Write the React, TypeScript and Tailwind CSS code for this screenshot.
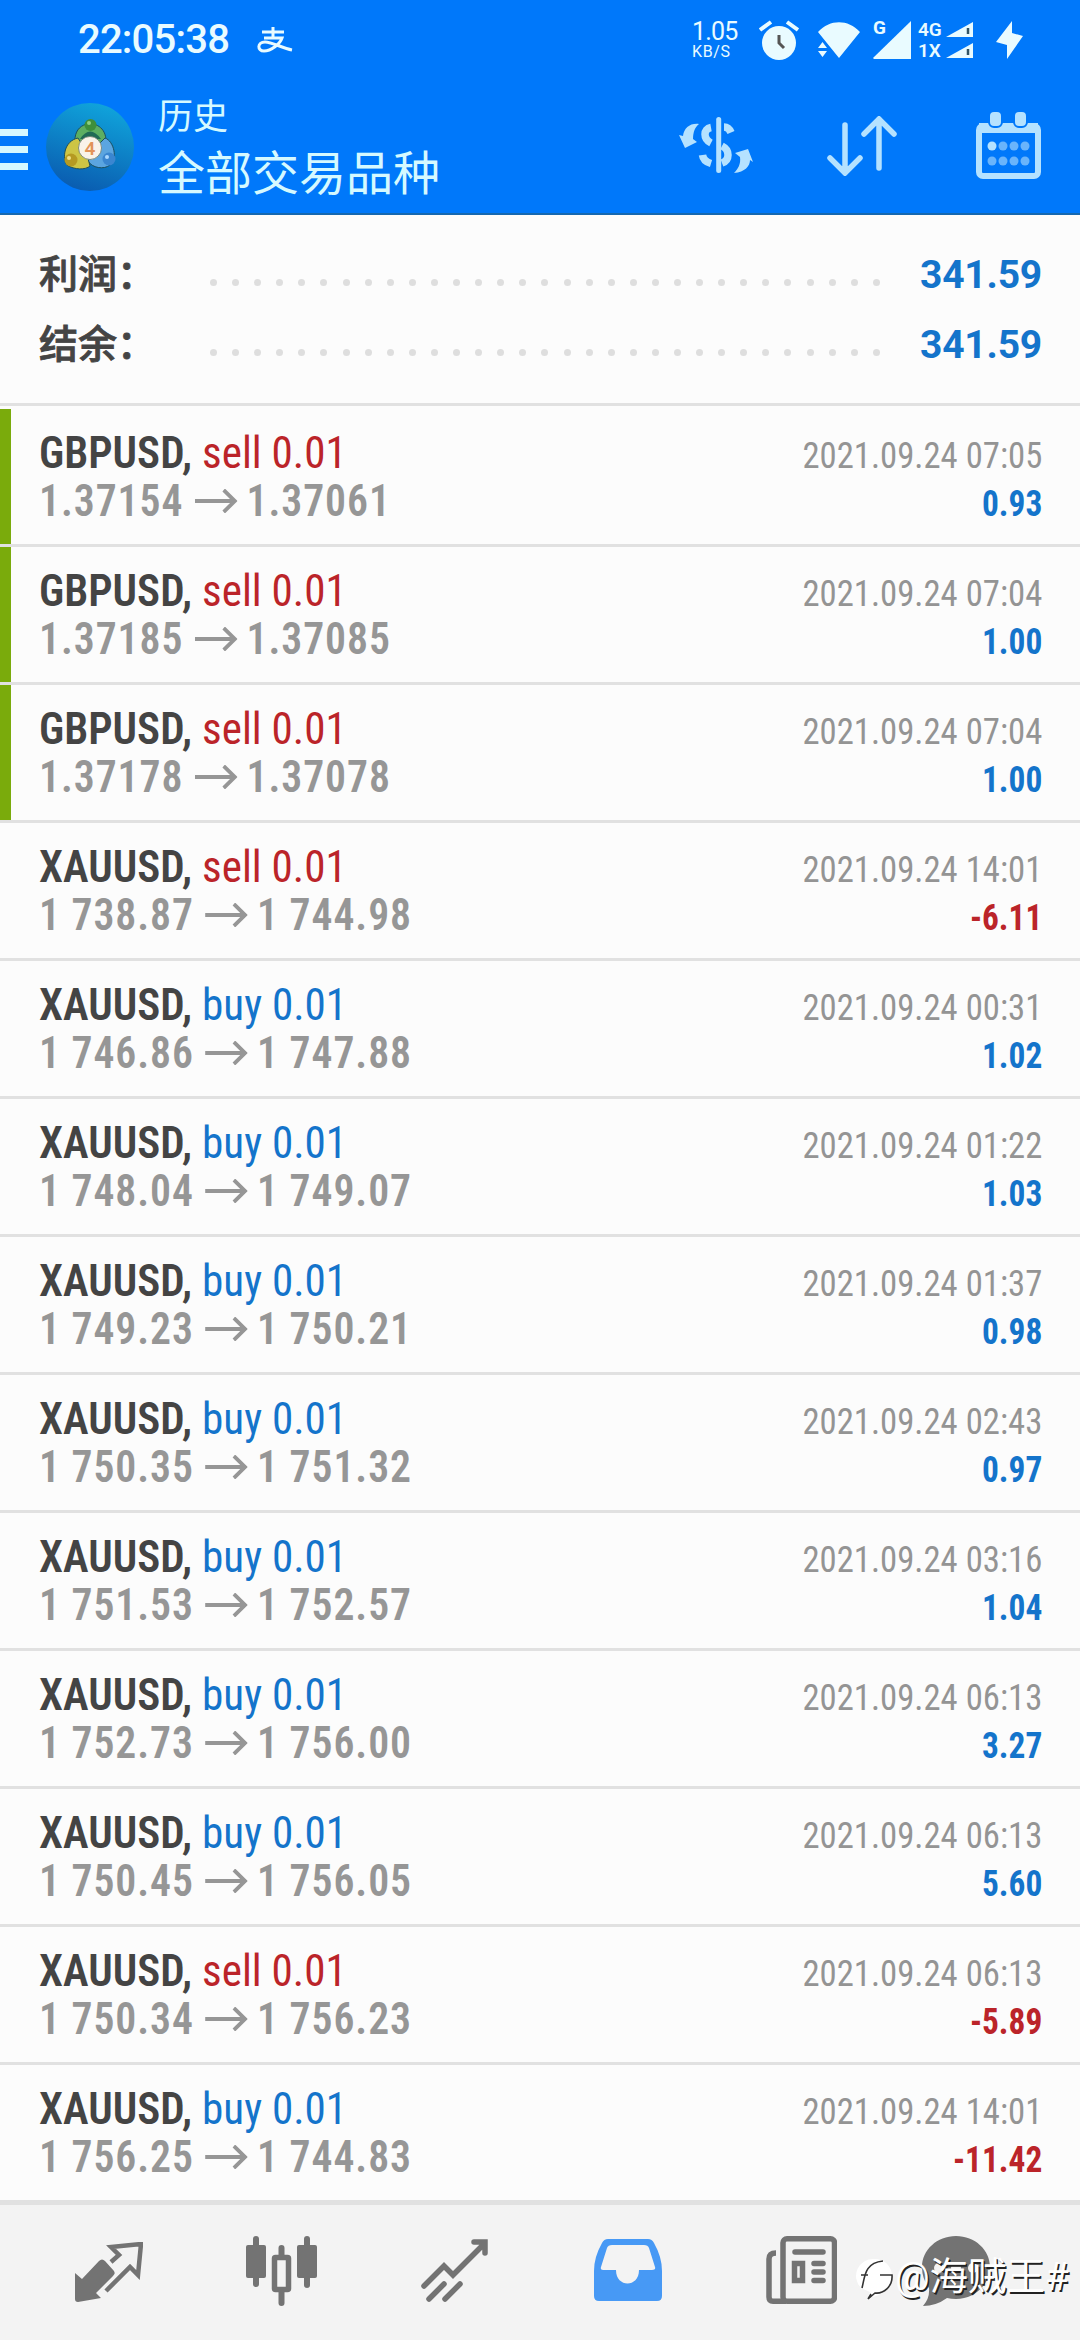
import type { ReactNode } from "react";

interface Deal {
  symbol: string;
  side: "buy" | "sell";
  open: string;
  close: string;
  time: string;
  profit: string;
  marked?: boolean;
}

const deals: Deal[] = [
  { symbol: "GBPUSD", side: "sell", open: "1.37154", close: "1.37061", time: "2021.09.24 07:05", profit: "0.93", marked: true },
  { symbol: "GBPUSD", side: "sell", open: "1.37185", close: "1.37085", time: "2021.09.24 07:04", profit: "1.00", marked: true },
  { symbol: "GBPUSD", side: "sell", open: "1.37178", close: "1.37078", time: "2021.09.24 07:04", profit: "1.00", marked: true },
  { symbol: "XAUUSD", side: "sell", open: "1 738.87", close: "1 744.98", time: "2021.09.24 14:01", profit: "-6.11" },
  { symbol: "XAUUSD", side: "buy", open: "1 746.86", close: "1 747.88", time: "2021.09.24 00:31", profit: "1.02" },
  { symbol: "XAUUSD", side: "buy", open: "1 748.04", close: "1 749.07", time: "2021.09.24 01:22", profit: "1.03" },
  { symbol: "XAUUSD", side: "buy", open: "1 749.23", close: "1 750.21", time: "2021.09.24 01:37", profit: "0.98" },
  { symbol: "XAUUSD", side: "buy", open: "1 750.35", close: "1 751.32", time: "2021.09.24 02:43", profit: "0.97" },
  { symbol: "XAUUSD", side: "buy", open: "1 751.53", close: "1 752.57", time: "2021.09.24 03:16", profit: "1.04" },
  { symbol: "XAUUSD", side: "buy", open: "1 752.73", close: "1 756.00", time: "2021.09.24 06:13", profit: "3.27" },
  { symbol: "XAUUSD", side: "buy", open: "1 750.45", close: "1 756.05", time: "2021.09.24 06:13", profit: "5.60" },
  { symbol: "XAUUSD", side: "sell", open: "1 750.34", close: "1 756.23", time: "2021.09.24 06:13", profit: "-5.89" },
  { symbol: "XAUUSD", side: "buy", open: "1 756.25", close: "1 744.83", time: "2021.09.24 14:01", profit: "-11.42" },
];

function StatusBar() {
  return (
    <div className="flex h-20 items-center pl-[78px] text-[#e9fbff]">
      <span className="w-[151px] text-[40px] leading-[78px] font-medium tracking-[-0.8px] whitespace-nowrap">22:05:38</span>
      <svg className="ml-[28px] h-[27px] w-[36px]" viewBox="0 0 36 27" fill="none" stroke="currentColor" strokeWidth="3">
        <path d="M5 5H27M16 0V11M7 11H25C23 17 14 24 7 24C0 24 0 15 8 15C15 15 25 21 35 23" />
      </svg>
      <div className="ml-[399px] w-[46px]">
        <div className="text-[25px] leading-[24px] tracking-[-0.8px]">1.05</div>
        <div className="text-[16px] leading-[16px] tracking-[0.6px]">KB/S</div>
      </div>
      <svg className="ml-[21px] h-10 w-10" viewBox="0 0 40 40" fill="none">
        <circle cx="20" cy="23" r="17" fill="currentColor" />
        <path d="M1 10L12 2M28 2L39 10" stroke="currentColor" strokeWidth="4" />
        <path d="M20 15V23L25 28" stroke="#555" strokeWidth="3" />
      </svg>
      <svg className="ml-[19px] h-[36px] w-[42px]" viewBox="0 0 42 36" fill="currentColor">
        <path d="M0 10C12 -3 30 -3 42 10L21 36ZM0 26L4.500 20L9 26ZM0 29H9L4.500 35Z" />
      </svg>
      <div className="relative ml-[13px] h-[38px] w-[38px]">
        <svg className="h-[38px] w-[38px]" viewBox="0 0 38 38" fill="currentColor">
          <path d="M0 37L38 0V38H1Z" />
        </svg>
        <span className="absolute -top-[3px] left-0 text-[19px] leading-[20px] font-bold">G</span>
      </div>
      <div className="ml-[7px] flex flex-col text-[19px] leading-[21px] font-semibold">
        <div className="flex items-center gap-[1px]"><span className="w-[27px]">4G</span><SmallSignal /></div>
        <div className="flex items-center gap-[1px]"><span className="w-[27px]">1X</span><SmallSignal /></div>
      </div>
      <svg className="ml-[23px] h-[38px] w-[27px]" viewBox="0 0 27 38" fill="currentColor">
        <path d="M16 0L0 21L11 24V38L27 15L16 12Z" />
      </svg>
    </div>
  );
}

function SmallSignal() {
  return (
    <svg className="h-[15px] w-[27px]" viewBox="0 0 27 15">
      <path d="M0 15L27 0V15Z" fill="currentColor" />
      <path d="M22 6V12" stroke="#356" strokeWidth="2.500" />
    </svg>
  );
}

function Toolbar() {
  return (
    <div className="flex h-[135px] items-start border-b-2 border-[#1668b0] text-[#b5e2ff]">
      <div className="mt-[49px] flex w-[28px] flex-col gap-[10px]">
        <div className="h-[7px] bg-[#d5f8ff]" />
        <div className="h-[7px] bg-[#d5f8ff]" />
        <div className="h-[7px] bg-[#d5f8ff]" />
      </div>
      <Logo />
      <div className="ml-[23px] w-[521px] text-[#d5f9ff]">
        <div className="mt-[16px] text-[35px] leading-[44px]">历史</div>
        <div className="text-[47px] leading-[68px]">全部交易品种</div>
      </div>
      <svg className="mt-[37px] h-[56px] w-[74px]" viewBox="678 117 74 56" fill="none" stroke="currentColor">
        <path d="M717.700 119.500V170.500" strokeWidth="5" strokeLinecap="round" />
        <path d="M710 127.500C702 129 702 139 710 143M701.500 155C702 159 705 162 710 163.500" strokeWidth="7.500" />
        <path d="M723 127C727 127 729 130 730 132.500M721 146C729 150 729 160 721 163" strokeWidth="7.500" />
        <path d="M698 124C689 123 683 128 682 136L678 135L684 148L696 142L692 139C692 132 694 127 698 124ZM733 173C744 172 749 166 749 160L752 162L747 149L734 153L739 157C740 164 737 169 733 173Z" fill="currentColor" stroke="none" />
      </svg>
      <svg className="mt-[36px] ml-[74px] h-[60px] w-[70px]" viewBox="826 116 70 60" fill="none" stroke="currentColor" strokeWidth="5.500" strokeLinecap="round">
        <path d="M844 125V173M829 158L844 173L859 158M878 168V119M863 134L878 119L893 134" />
      </svg>
      <Calendar />
    </div>
  );
}

function Logo() {
  return (
    <svg className="mt-[22px] ml-[17px] h-[90px] w-[90px]" viewBox="45 102 90 90">
      <defs>
        <linearGradient id="disc" x1="0.700" y1="0" x2="0.400" y2="1">
          <stop offset="0" stopColor="#10a5dc" />
          <stop offset="1" stopColor="#0a5cb0" />
        </linearGradient>
      </defs>
      <circle cx="90" cy="147" r="44" fill="url(#disc)" />
      <g stroke="#1d4f5c" strokeWidth="1">
        <path d="M75 141C74 118 106 118 106 141L101 146H80Z" fill="#5cae62" />
        <path d="M92 151L105 138C114 141 118 159 110 165C104 170 92 168 88 161Z" fill="#5ba5e0" />
        <path d="M78 138C64 141 62 158 67 165C74 170 86 170 90 166L86 151Z" fill="#cdc544" />
      </g>
      <path d="M80 139Q90 124 101 139Z" fill="#206a55" />
      <circle cx="90.500" cy="125" r="6" fill="#3f8f3a" />
      <circle cx="71" cy="160" r="6.500" fill="#b59a22" />
      <circle cx="109" cy="159" r="6.500" fill="#3a86d0" />
      <circle cx="89" cy="123" r="2" fill="#8fcf80" />
      <circle cx="69" cy="158" r="2" fill="#efe08a" />
      <circle cx="107" cy="157" r="2" fill="#a9d8ff" />
      <circle cx="90" cy="148" r="11.500" fill="#f9f3ea" stroke="#6a7a6a" strokeWidth="0.800" />
      <text x="90" y="155" textAnchor="middle" fontSize="19" fontWeight="600" fill="#e2935a">4</text>
    </svg>
  );
}

function Calendar() {
  return (
    <svg className="mt-[32px] ml-[79px] h-[68px] w-[65px]" viewBox="975 112 65 68">
      <rect x="978" y="126" width="59" height="50" rx="4" fill="none" stroke="currentColor" strokeWidth="6" />
      <rect x="978" y="123" width="59" height="10" fill="currentColor" />
      <rect x="988" y="111" width="13" height="16" rx="5" fill="currentColor" stroke="#0078fa" strokeWidth="2" />
      <rect x="1013" y="111" width="13" height="16" rx="5" fill="currentColor" stroke="#0078fa" strokeWidth="2" />
      {[991, 1002, 1013, 1024].map((x) => (
        <g key={x} fill="#69b4fb">
          <circle cx={x} cy="146" r="4.500" fill={x === 991 ? "#b5e2ff" : "#69b4fb"} />
          <circle cx={x} cy="161" r="4.500" />
        </g>
      ))}
    </svg>
  );
}

function SummaryRow({ label, value }: { label: string; value: string }) {
  return (
    <div className="flex h-[70px] items-center pr-[38px] pl-[39px]">
      <span className="w-[171px] text-[39px] font-medium text-[#444] [-webkit-text-stroke:0.8px_#444]">{label}</span>
      <div className="mt-[14px] flex w-[667px] gap-[15.1px]">
        {Array.from({ length: 31 }, (_, i) => (
          <span key={i} className="h-[7px] w-[7px] shrink-0 rounded-full bg-[#dedede]" />
        ))}
      </div>
      <span className="ml-auto text-[39px] font-bold tracking-[-0.2px] text-[#1474cb]">{value}</span>
    </div>
  );
}

function DealRow({ deal }: { deal: Deal }) {
  const sideColor = deal.side === "buy" ? "text-[#1474cb]" : "text-[#bb2429]";
  const profitColor = deal.profit.startsWith("-") ? "text-[#bb2429]" : "text-[#1474cb]";
  return (
    <div className="flex h-[138px] border-b-[3px] border-[#e1e1e1] pr-[38px] font-stretch-[75%] whitespace-pre">
      <div className={deal.marked ? "w-[11px] bg-[#7aab0c]" : "w-[11px]"} />
      <div className="flex-1 pt-[20px] pl-[28px] text-[45px] leading-[48px]">
        <div className="origin-left scale-x-[0.957]">
          <span className="font-semibold text-[#444]">{deal.symbol},</span>
          <span className={sideColor}> {deal.side} 0.01</span>
        </div>
        <div className="flex origin-left scale-x-[0.928] items-center font-semibold tracking-[1px] text-[#969696]">
          <span>{deal.open}</span>
          <svg className="mr-[10px] ml-[12px] h-[24px] w-[46px]" viewBox="0 0 46 24" fill="none" stroke="currentColor" strokeWidth="4">
            <path d="M0 12H43M31 1L43 12L31 23" />
          </svg>
          <span>{deal.close}</span>
        </div>
      </div>
      <div className="pt-[22px] text-right text-[37.5px] leading-[48px]">
        <div className="origin-right scale-x-[0.925] text-[#949494]">{deal.time}</div>
        <div className={`origin-right scale-x-[0.89] font-bold ${profitColor}`}>{deal.profit}</div>
      </div>
    </div>
  );
}

function NavItem({ children }: { children: ReactNode }) {
  return <div className="flex h-full items-start justify-center">{children}</div>;
}

function BottomNav() {
  return (
    <div className="relative flex h-[140px] border-t-[5px] border-[#e1e1e1] bg-[#f3f3f3] pl-[75px] text-[#737373]">
      <NavItem>
        <svg className="mt-[37px] h-[60px] w-[68px]" viewBox="0 0 68 60">
          <path d="M0 31L7 37L24 19C26 17 28 17 30 19L39 29C40 31 40 32 38 34L21 51L26 56L3 60C1 60 0 59 0 57Z" fill="currentColor" />
          <path d="M36 20L44 13L36 5L66 2L63 33L55 25L31 49" fill="none" stroke="currentColor" strokeWidth="4.500" strokeLinejoin="miter" />
        </svg>
      </NavItem>
      <NavItem>
        <svg className="mt-[31px] ml-[103px] h-[70px] w-[71px]" viewBox="0 0 71 70" fill="currentColor">
          <rect x="0" y="9" width="20" height="33" rx="2" />
          <rect x="7" y="0" width="6" height="51" rx="3" />
          <rect x="51" y="9" width="20" height="33" rx="2" />
          <rect x="58" y="0" width="6" height="52" rx="3" />
          <rect x="28.500" y="21.500" width="14" height="32" rx="1" fill="none" stroke="currentColor" strokeWidth="5.500" />
          <path d="M32.500 20V12Q32.500 9 35.500 9T38.500 12V20ZM32.500 55V67Q32.500 70 35.500 70T38.500 67V55Z" />
        </svg>
      </NavItem>
      <NavItem>
        <svg className="mt-[34px] ml-[104px] h-[64px] w-[68px]" viewBox="0 0 68 64" fill="none" stroke="currentColor" strokeWidth="5.500" strokeLinecap="round">
          <path d="M3 47L23 27L32 36L63 5M53 3H64V14M8 60L23 45M24 60L39 45" />
        </svg>
      </NavItem>
      <NavItem>
        <svg className="mt-[34px] ml-[105px] h-[62px] w-[68px] text-[#4799f5]" viewBox="0 0 68 62">
          <path fillRule="evenodd" fill="currentColor" d="M14 0H54Q58 0 60 4Q68 18 68 32V57Q68 62 63 62H5Q0 62 0 57V32Q0 18 8 4Q10 0 14 0ZM18 6Q14 6 13 9L7 28Q6 31 9 31H22C22 49 45 49 45 31H58Q62 31 61 28L55 9Q54 6 50 6Z" />
        </svg>
      </NavItem>
      <NavItem>
        <svg className="mt-[31px] ml-[104px] h-[68px] w-[71px]" viewBox="0 0 71 68" fill="none" stroke="currentColor" strokeWidth="5.500">
          <rect x="17" y="2.750" width="51.500" height="62.500" rx="4" />
          <path d="M10 17Q3 17 3 23V61Q3 65.250 7 65.250H20" />
          <path d="M29 16H57M48 27.500H57M48 36H57M48 44.500H57" strokeLinecap="round" />
          <rect x="28.500" y="27.500" width="8" height="17" />
        </svg>
      </NavItem>
      <NavItem>
        <svg className="mt-[31px] ml-[85px] h-[70px] w-[68px]" viewBox="0 0 68 70">
          <path d="M34 0C53 0 68 14 68 31S53 63 34 63Q29 63 25 62Q14 70 1 70Q8 62 7 52Q0 43 0 31C0 14 15 0 34 0Z" fill="currentColor" />
          <circle cx="17" cy="32" r="5" fill="#f3f3f3" />
          <circle cx="34" cy="32" r="5" fill="#f3f3f3" />
          <circle cx="51" cy="32" r="5" fill="#f3f3f3" />
        </svg>
      </NavItem>
      <Watermark />
    </div>
  );
}

function Watermark() {
  return (
    <div className="absolute top-[47px] left-[856px] flex items-center text-white">
      <svg className="mt-[3px] h-[42px] w-[38px]" viewBox="0 0 38 42">
        <path d="M18 1A17 17 0 0 0 5 30L14 34L12 40C27 38 36 29 36 18A17 17 0 0 0 18 1Z" fill="#fff" />
        <path d="M6 30C9 19 8 5 27 3M5 17H12M24 17H36C37 29 27 36 19 35L12 41M12 41L15 36" fill="none" stroke="#333" strokeWidth="1.600" />
      </svg>
      <span className="ml-[1px] text-[38.500px] leading-[50px] whitespace-nowrap [text-shadow:1.5px_1.5px_0.5px_#222]">@海贼王#</span>
    </div>
  );
}

export default function App() {
  return (
    <div className="h-[2340px] w-[1080px] overflow-hidden bg-[#fcfcfc] font-['Roboto','Noto_Sans_CJK_SC',sans-serif]">
      <header className="bg-[#0078fa]">
        <StatusBar />
        <Toolbar />
      </header>
      <section className="h-[191px] border-b-[3px] border-[#e1e1e1] pt-[25px]">
        <SummaryRow label="利润：" value="341.59" />
        <SummaryRow label="结余：" value="341.59" />
      </section>
      <main className="h-[1794px] overflow-hidden pt-[3px]">
        {deals.map((deal, i) => (
          <DealRow key={i} deal={deal} />
        ))}
      </main>
      <BottomNav />
    </div>
  );
}
